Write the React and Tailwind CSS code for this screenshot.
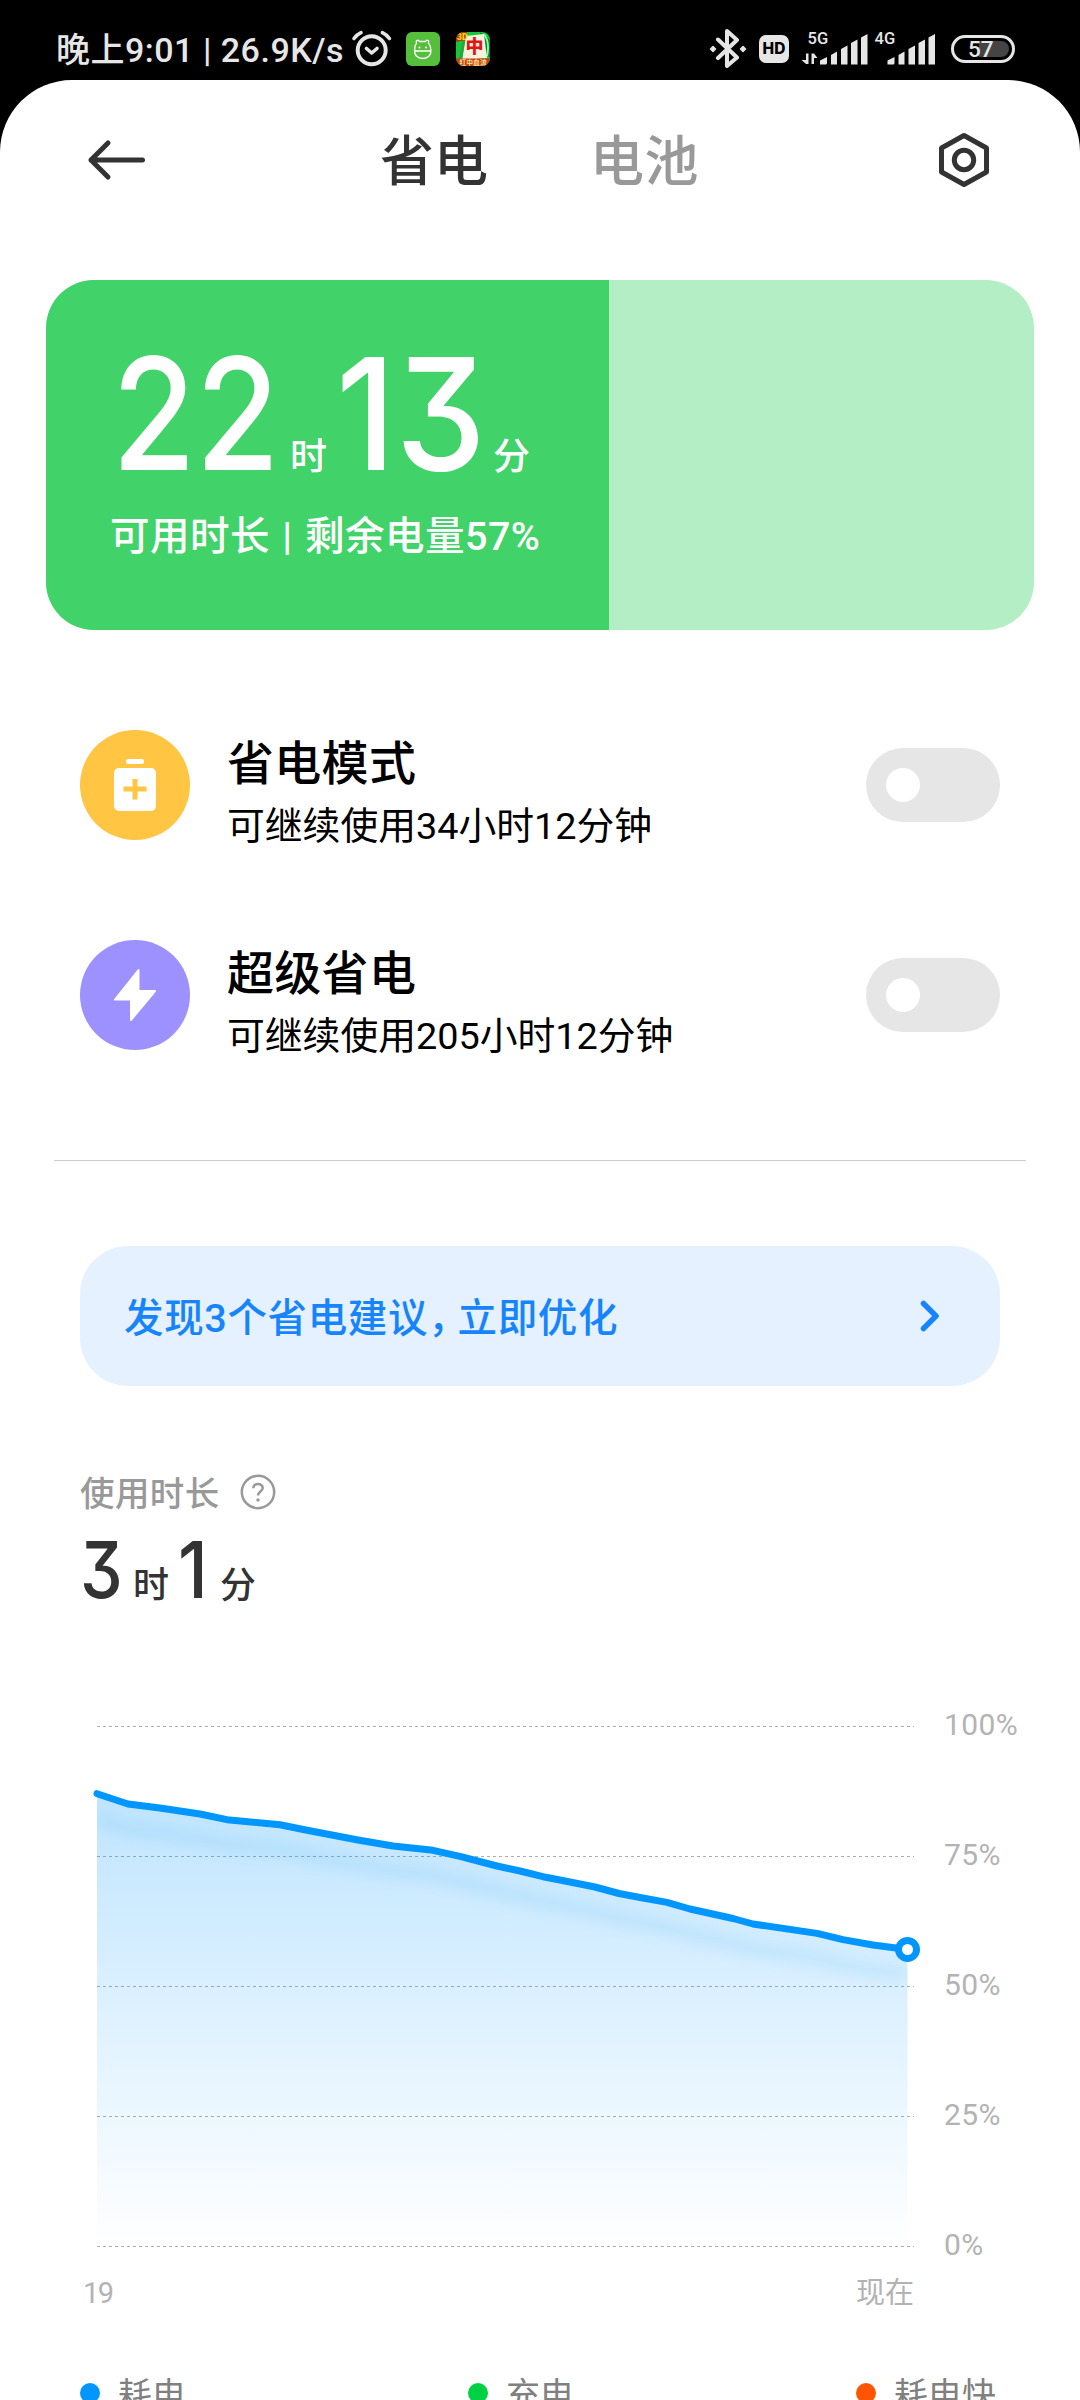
import React from "react";

const LINE = [
  [97, 1793.7], [128, 1804], [160, 1808], [200, 1814], [227, 1819.7], [280, 1824.7],
  [307, 1830.3], [358, 1840], [393, 1846], [433, 1850.3], [460, 1856.3], [497, 1866],
  [520, 1871], [543, 1876.7], [560, 1880], [595, 1887], [619, 1893.5], [640, 1897.5],
  [667, 1902.4], [690, 1909], [733, 1918.5], [753, 1924], [817, 1933.4], [843, 1939.6],
  [873, 1945], [907.5, 1949.5],
].map(([x, y]) => [x - 80, y - 1706]);

const linePath = "M" + LINE.map((p) => p.join(" ")).join("L");
const areaPath = `${linePath}L827.5 540L17 540Z`;

function StatusBar() {
  return (
    <div className="flex h-20 items-start pt-7 pl-14 text-[#e6e6e6]">
      <div className="h-10 w-[292px] pt-px text-[34px] leading-[42px] font-medium tracking-[0.5px] whitespace-nowrap">
        晚上9:01 | 26.9K/s
      </div>
      <svg className="ml-0.5 h-10 w-11" viewBox="350 28 44 40" fill="none" stroke="#e6e6e6" strokeLinecap="round">
        <circle cx="371.7" cy="50.3" r="14" strokeWidth="4" />
        <path d="M354 38.5Q357 34.500 361 32.700M389.400 38.500Q386.400 34.500 382.400 32.700" strokeWidth="3.600" />
        <path d="M366.500 48.500L371.700 53L377 48.500" strokeWidth="3.600" strokeLinejoin="round" />
      </svg>
      <svg className="mt-1 ml-3 size-[34px]" viewBox="0 0 34 34" fill="none" stroke="#fff" strokeWidth="1.300">
        <rect width="34" height="34" rx="6" fill="#55bf3c" stroke="none" />
        <path d="M8.700 17.500C8.700 13.500 10 11.800 10.500 11.200C9.500 8 12.500 7.500 13.500 9.500H19.500C20.500 7.500 23.500 8 22.500 11.200C23 11.800 24.800 13.500 24.800 17.500C25.500 23 22 26.500 16.700 26.500S8 23 8.700 17.500ZM8.500 19H25" />
        <circle cx="13.500" cy="15.500" r="1" fill="#fff" stroke="none" />
        <circle cx="20" cy="15.500" r="1" fill="#fff" stroke="none" />
      </svg>
      <svg className="mt-1 ml-4 size-[34px] rounded-lg" viewBox="0 0 34 34">
        <rect width="34" height="34" fill="#17c63c" />
        <path d="M24 0L34 8V26L28 20Z" fill="#0b7a2a" />
        <path d="M28 2Q34 10 31 24" stroke="#7dffa0" strokeWidth="2" fill="none" />
        <path d="M10 4L28 2L31 26L6 28Z" fill="#f7f2dc" />
        <path d="M10 4L6 28L3 27L7 6Z" fill="#2aa53d" />
        <text x="9.500" y="21" fontSize="18" fontWeight="900" fill="#e01515">中</text>
        <path d="M0 0H11L9 8L0 10Z" fill="#b3340c" />
        <text x="1" y="7.500" fontSize="8.500" fontWeight="900" fill="#ffd21f">3D</text>
        <rect y="26.500" width="34" height="7.500" fill="#c2410c" />
        <text x="3.500" y="33" fontSize="6.800" fontWeight="700" fill="#ffdf9a">红中血流</text>
      </svg>
      <svg className="ml-[219px] h-10 w-[38px]" viewBox="709 28 38 40" fill="none" stroke="#e6e6e6" strokeWidth="4" strokeLinejoin="round" strokeLinecap="round">
        <path d="M718 39.500L737 57.500L727 66V31L737 40L718 58" />
        <path d="M713 46.500L715.500 49L713 51.500L710.500 49ZM743 46.500L745.500 49L743 51.500L740.500 49Z" fill="#e6e6e6" strokeWidth="1.500" />
      </svg>
      <div className="mt-[7px] ml-3 flex h-[28px] w-[30px] items-center justify-center rounded-[7px] bg-[#e6e6e6] font-['Inter'] text-[15.500px] font-extrabold text-black">
        HD
      </div>
      <svg className="ml-3 h-10 w-[134px]" viewBox="801 28 134 40" fill="#e6e6e6">
        <text x="807.500" y="44" fontSize="16.500" fontWeight="500">5G</text>
        <text x="874.500" y="44" fontSize="16.500" fontWeight="500">4G</text>
        <path d="M806 53.500H808.500V64H806L801.500 60H806ZM811.500 53.500H814L817.500 58H814V64H811.500Z" />
        {[0, 67.5].map((dx) => (
          <path
            key={dx}
            transform={`translate(${dx} 0)`}
            d="M820 60.500L827 57V63Q827 64.500 825.500 64.500H820ZM831 55L837 51.500V64.500H831ZM841 49L847.500 45.500V64.500H841ZM851 43L857.500 39.500V64.500H851ZM861 37.500L867.500 34V64.500H861Z"
          />
        ))}
      </svg>
      <div className="relative mt-[7px] ml-4 h-7 w-16 rounded-full border-[3px] border-[#e6e6e6]">
        <div className="mt-[3px] ml-[25px] h-4 w-[30px] rounded-r-full bg-[#444]" />
        <span className="absolute top-0 left-[14px] text-[22.500px] leading-[22px] font-medium">57</span>
      </div>
    </div>
  );
}

function Header() {
  return (
    <header className="flex h-40 items-center pl-[86px]">
      <svg className="h-11 w-[62px]" viewBox="0 0 62 44" fill="none" stroke="#333" strokeWidth="5" strokeLinecap="round" strokeLinejoin="round">
        <path d="M56.500 22H5M22 5L5 22L22 39" />
      </svg>
      <h1 className="ml-[232px] w-[210px] pt-1.5 text-[54px] leading-none font-medium text-[#333]">省电</h1>
      <span className="w-[348px] pt-1.5 text-[54px] leading-none font-medium tracking-[0.5px] text-[#999]">电池</span>
      <svg className="h-14 w-[52px]" viewBox="0 0 52 56" fill="none" stroke="#333" strokeWidth="5" strokeLinejoin="round">
        <path d="M26 3.500L48.500 16V40L26 52.500L3.500 40V16Z" />
        <circle cx="26" cy="28" r="9.700" />
      </svg>
    </header>
  );
}

function BatteryCard() {
  return (
    <section className="mx-[46px] mt-10 flex h-[350px] overflow-hidden rounded-[48px] bg-[#b3eec5]">
      <div className="w-[57%] bg-[#41d369] pt-16 pl-[66px] text-white">
        <div className="flex h-[140px] items-baseline font-medium whitespace-nowrap">
          <span className="w-[178px] origin-left scale-x-[0.87] font-['Inter'] text-[156px] leading-[140px] [font-feature-settings:'cv09']">22</span>
          <span className="w-[46px] text-[37px]">时</span>
          <span className="w-[157px] origin-left scale-x-[0.92] font-['Inter'] text-[156px] leading-[140px] [font-feature-settings:'cv09']">13</span>
          <span className="text-[37px]">分</span>
        </div>
        <div className="mt-[31px] -ml-0.5 text-[39.500px] leading-[44px] font-medium tracking-[0.5px] whitespace-nowrap [word-spacing:2px]">可用时长 | 剩余电量57%</div>
      </div>
    </section>
  );
}

function ModeRow({ color, icon, title, desc }) {
  return (
    <div className="flex h-[110px] items-center">
      <div className={`flex size-[110px] items-center justify-center rounded-full ${color}`}>{icon}</div>
      <div className="ml-[37px] flex-1 pt-[19px] whitespace-nowrap text-black">
        <div className="text-[47px] leading-[62px] font-medium tracking-[0.3px]">{title}</div>
        <div className="text-[37.800px] leading-[62px]">{desc}</div>
      </div>
      <div className="h-[74px] w-[134px] rounded-full bg-[#e6e6e6] p-5">
        <div className="size-[34px] rounded-full bg-white" />
      </div>
    </div>
  );
}

function Suggestion() {
  return (
    <div className="mx-20 mt-[85px] flex h-[140px] items-center rounded-[48px] bg-[#e5f1ff] pr-[58px] pl-11 text-[#1684fc]">
      <span className="flex-1 pt-1.5 text-[39.500px] leading-none font-medium tracking-[0.65px]">
        发现3个省电建议<span className="mr-[9px] [font-feature-settings:'halt']">，</span>立即优化
      </span>
      <svg className="h-9 w-6" viewBox="0 0 24 36" fill="none" stroke="#1684fc" strokeWidth="5.500" strokeLinecap="round" strokeLinejoin="round">
        <path d="M5.500 5.500L18 18L5.500 30.500" />
      </svg>
    </div>
  );
}

function Usage() {
  return (
    <section className="pt-[84px] pl-20">
      <div className="flex h-11 items-center">
        <span className="w-[160px] pt-1 text-[34.500px] leading-none font-medium tracking-[0.4px] text-[#999]">使用时长</span>
        <svg className="size-9" viewBox="0 0 36 36" fill="none" stroke="#999" strokeWidth="2.500">
          <circle cx="18" cy="18" r="16.200" />
          <path d="M13.300 14.200C13.300 8.500 22.700 8.500 22.700 14C22.700 17.500 18 17.500 18 21.500" />
          <circle cx="18" cy="26" r="1.700" fill="#999" stroke="none" />
        </svg>
      </div>
      <div className="flex h-20 items-baseline pt-2.5 font-medium whitespace-nowrap text-[#333]">
        <span className="w-[53px] origin-left scale-x-[0.87] font-['Inter'] text-[78px] leading-[92px] [font-feature-settings:'cv09']">3</span>
        <span className="w-[45px] text-[36px]">时</span>
        <span className="w-[42px] origin-left scale-x-[0.92] font-['Inter'] text-[78px] leading-[92px]">1</span>
        <span className="text-[36px]">分</span>
      </div>
    </section>
  );
}

function Chart() {
  return (
    <section className="mt-[112px] ml-20 text-[29px] text-[#b3b3b3]">
      <div className="flex">
        <svg className="h-[560px] w-[864px]" viewBox="0 0 864 560" fill="none">
          <defs>
            <linearGradient id="fill" gradientUnits="userSpaceOnUse" x1="0" y1="90" x2="0" y2="540">
              <stop offset="0" stopColor="#0096ff" stopOpacity="0.250" />
              <stop offset="1" stopColor="#0096ff" stopOpacity="0" />
            </linearGradient>
            <filter id="soft" x="-10%" y="-20%" width="120%" height="150%">
              <feGaussianBlur stdDeviation="6" />
            </filter>
            <clipPath id="area">
              <path d={areaPath} />
            </clipPath>
          </defs>
          {[20, 150, 280, 410, 540].map((y) => (
            <path key={y} d={`M17 ${y + 0.5}H834`} stroke="#adadad" strokeDasharray="3 3" />
          ))}
          <path d={areaPath} fill="url(#fill)" />
          <g clipPath="url(#area)">
            <path d={linePath} transform="translate(0 25)" stroke="#0096d8" strokeOpacity="0.080" strokeWidth="18" filter="url(#soft)" />
          </g>
          <path d={linePath} stroke="#0096ff" strokeWidth="7" strokeLinecap="round" strokeLinejoin="round" />
          <circle cx="827.5" cy="243.500" r="9" fill="#fff" stroke="#0096ff" strokeWidth="7" />
        </svg>
        <div className="-mt-0.5 flex flex-col">
          {["100%", "75%", "50%", "25%", "0%"].map((label) => (
            <span key={label} className="h-[130px] text-[30px] leading-[42px] tracking-[0.4px]">{label}</span>
          ))}
        </div>
      </div>
      <div className="-mt-[83px] flex w-[834px] justify-between pl-[3px] leading-[44px]">
        <span className="tracking-[-1.500px]">19</span>
        <span>现在</span>
      </div>
    </section>
  );
}

function LegendItem({ dot, label }) {
  return (
    <div className="flex h-10 w-[388px] shrink-0 items-center">
      <span className={`size-5 rounded-full ${dot}`} />
      <span className="ml-[18px] pt-[3px] text-[34px] leading-10 text-[#808080]">{label}</span>
    </div>
  );
}

export default function App() {
  return (
    <div className="h-[2400px] w-[1080px] overflow-hidden bg-black font-[Roboto,'Noto_Sans_CJK_SC',sans-serif]">
      <StatusBar />
      <main className="h-[2320px] overflow-hidden rounded-t-[72px] bg-white">
        <Header />
        <BatteryCard />
        <section className="mt-[100px] flex flex-col gap-[100px] px-20">
          <ModeRow
            color="bg-[#ffc543]"
            title="省电模式"
            desc="可继续使用34小时12分钟"
            icon={
              <svg className="h-[52px] w-[42px]" viewBox="0 0 42 52" fill="#fff">
                <rect x="12" width="18" height="5" rx="2" />
                <rect y="9" width="42" height="43" rx="5" />
                <path d="M21 20V40.500M9.500 30H32.500" stroke="#ffc543" strokeWidth="5" />
              </svg>
            }
          />
          <ModeRow
            color="bg-[#9d91ff]"
            title="超级省电"
            desc="可继续使用205小时12分钟"
            icon={
              <svg className="h-[54px] w-[44px]" viewBox="0 0 44 54" fill="#fff" stroke="#fff" strokeWidth="2" strokeLinejoin="round">
                <path d="M25.500 2L2 31.500H18V52L42 23H25.500Z" />
              </svg>
            }
          />
        </section>
        <div className="mx-[54px] mt-[110px] h-px bg-[#ccc]" />
        <Suggestion />
        <Usage />
        <Chart />
        <div className="mt-[58px] flex pl-20">
          <LegendItem dot="bg-[#0096ff]" label="耗电" />
          <LegendItem dot="bg-[#00d043]" label="充电" />
          <LegendItem dot="bg-[#ff5500]" label="耗电快" />
        </div>
      </main>
    </div>
  );
}
